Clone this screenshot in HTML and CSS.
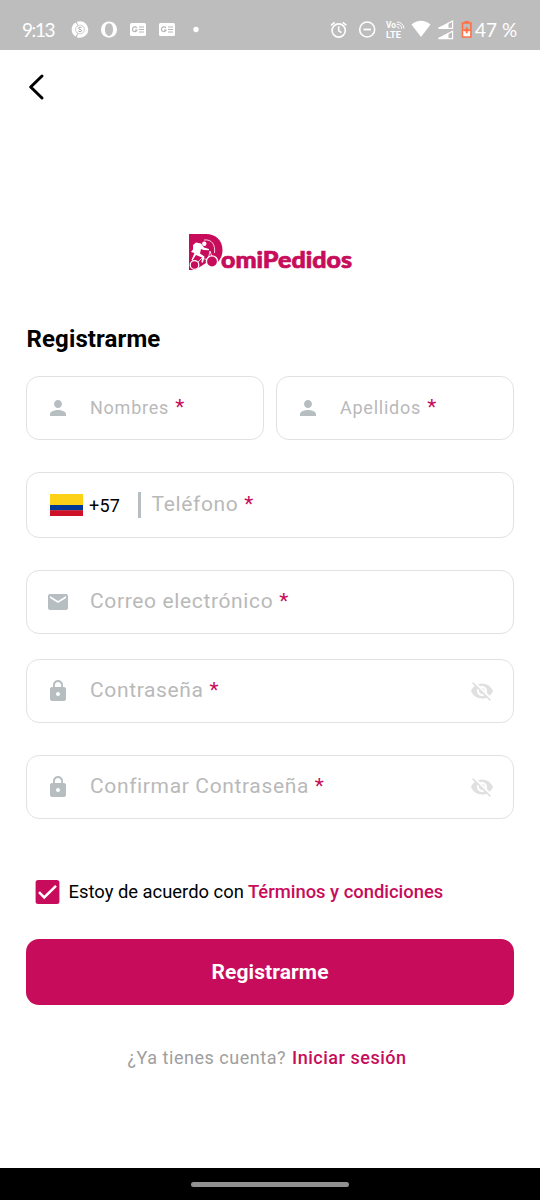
FILE: index.html
```html
<!DOCTYPE html>
<html lang="es">
<head>
<meta charset="utf-8">
<title>DomiPedidos</title>
<link rel="stylesheet" href="styles.css">
</head>
<body>
<svg class="defs" aria-hidden="true">
  <symbol id="person" viewBox="0 0 24 24"><path d="M12 12c2.21 0 4-1.79 4-4s-1.79-4-4-4-4 1.79-4 4 1.79 4 4 4zm0 2c-2.67 0-8 1.34-8 4v2h16v-2c0-2.66-5.33-4-8-4z"/></symbol>
  <symbol id="mail" viewBox="0 0 24 24"><path d="M20 4H4c-1.1 0-2 .9-2 2v12c0 1.1.9 2 2 2h16c1.1 0 2-.9 2-2V6c0-1.1-.9-2-2-2zm0 4l-8 5-8-5V6l8 5 8-5v2z"/></symbol>
  <symbol id="lock" viewBox="0 0 24 24"><path d="M18 8h-1V6c0-2.76-2.24-5-5-5S7 3.24 7 6v2H6c-1.1 0-2 .9-2 2v10c0 1.1.9 2 2 2h12c1.1 0 2-.9 2-2V10c0-1.1-.9-2-2-2zm-6 9c-1.1 0-2-.9-2-2s.9-2 2-2 2 .9 2 2-.9 2-2 2zm3.1-9H8.900V6c0-1.710 1.390-3.100 3.100-3.100s3.100 1.390 3.100 3.100v2z"/></symbol>
  <symbol id="eye-off" viewBox="0 0 24 24"><path d="M12 7c2.760 0 5 2.240 5 5 0 .650-.130 1.260-.360 1.830l2.920 2.920c1.510-1.260 2.700-2.890 3.430-4.750-1.730-4.390-6-7.500-11-7.500-1.400 0-2.740.250-3.980.700l2.160 2.160C10.740 7.130 11.350 7 12 7zM2 4.270l2.280 2.280.460.460C3.080 8.300 1.780 10.020 1 12c1.730 4.390 6 7.500 11 7.500 1.550 0 3.030-.300 4.380-.840l.420.420L19.730 22 21 20.730 3.270 3 2 4.270zM7.530 9.800l1.550 1.550c-.050.210-.080.430-.080.650 0 1.660 1.340 3 3 3 .220 0 .440-.030.650-.080l1.550 1.550c-.670.330-1.410.530-2.200.530-2.760 0-5-2.240-5-5 0-.790.200-1.530.530-2.200zm4.310-.780l3.150 3.150.020-.160c0-1.660-1.340-3-3-3l-.170.010z"/></symbol>
</svg>

<header class="status">
  <span class="clock">9:13</span>
  <svg class="notices" width="132" height="20" viewBox="0 0 132 20">
    <circle cx="9" cy="9.500" r="6.500" class="line" stroke-width="3.600" stroke-dasharray="12.600 1.013"/>
    <circle cx="9" cy="9.500" r="4.400" fill="#fff"/>
    <path d="M10.500 7.800c-.400-.800-3-.900-3 .500 0 1.300 3.100.900 3.100 2.300 0 1.500-2.800 1.300-3.300.300" fill="none" stroke="#a5a5a5" stroke-width="1"/>
    <circle cx="9" cy="9.500" r="4.300" fill="none" stroke="#c4c4c4" stroke-width=".6"/>
    <path fill="#fff" fill-rule="evenodd" d="M38 1.500a8 8.100 0 1 0 .01 0zM38 3.300c2.500 0 4 2.800 4 6.300s-1.500 6.300-4 6.300-4-2.800-4-6.300 1.500-6.300 4-6.300z"/>
    <g id="news"><rect x="59" y="3" width="16" height="13" rx="1.500" fill="#fff"/><path d="M65.800 7.900a2.400 2.400 0 1 0 .3 2.200h-2.100M68 7h5M68 9.500h5M68 12h5" fill="none" stroke="#b5b5b5" stroke-width="1.200"/></g>
    <use href="#news" x="29"/>
    <circle cx="125" cy="9.500" r="2.700" fill="#fff"/>
  </svg>
  <svg class="signals" width="142" height="22" viewBox="0 0 142 22">
    <g class="line" stroke-width="1.600">
      <circle cx="8.700" cy="11.500" r="6.600"/><path d="M8.700 7.300V11.800l2.800 1.900M1 6.300l3.600-3M16.400 6.300l-3.600-3"/>
      <circle cx="37.200" cy="10.500" r="7.500"/><path d="M33.500 10.500h7.400" stroke-width="1.800"/>
      <path d="M66.600 7.500a3 3 0 0 1 2.500 2.300M66.800 5.300a5 5 0 0 1 5 4.500M67 3a7 7 0 0 1 7 6.500" stroke-width="1"/>
      <path d="M122.600 2v7.300h-14zM122.600 12.300v7.300h-14z" stroke-width="1.200"/>
    </g>
    <text x="56" y="8.600" class="volte" textLength="10" lengthAdjust="spacingAndGlyphs">Vo</text>
    <text x="56" y="18.800" class="volte" textLength="15" lengthAdjust="spacingAndGlyphs">LTE</text>
    <path d="M81.500 5.500Q91-2 100.500 5.500L91 18z" fill="#fff"/>
    <path d="M118.500 4v5.300h-11zM118.500 14.300v5.300h-11z" fill="#fff"/>
    <path d="M132.500 4h8.400v14h-8.400z" fill="#bdbdbd" stroke="#ff7043" stroke-width="1.600"/>
    <path d="M133.300 12h6.800v5.200h-6.800z" fill="#fff"/>
    <path d="M134.500 2h4.400v2h-4.400z" fill="#ff7043"/>
    <path d="M136.700 8.200v6M133.700 11.200h6" stroke="#ff7043" stroke-width="1.900"/>
  </svg>
  <span class="battery">47 %</span>
</header>

<main class="page">
  <svg class="back" width="20" height="28" viewBox="0 0 20 28"><path d="M16 3L4.700 14l11.300 11" fill="none" stroke="#000" stroke-width="3" stroke-linecap="round" stroke-linejoin="round"/></svg>

  <svg class="logo" width="166" height="40" viewBox="0 0 166 40">
    <path d="M2 2h17c10 0 16.500 6.500 16.500 16 0 6-2.500 10-5.500 13H19L8 38H2z" fill="#c70c5b"/>
    <path d="M17 8c8-1 11.500 5 10.500 13" fill="none" stroke="#fff" stroke-width=".8"/>
    <circle cx="17.300" cy="11.800" r="2.200" fill="#fff"/>
    <path d="M6 13l3-2.500 5 1 3 4 5 1.500v1.200l-5.500-.200-2.500-1-1 4.500 4.500 3-1.500 6h-1.500l.5-5-6-2.500-3.500 5.500-1-.500 3-7-3.500-1 2-2.500z" fill="#fff"/>
    <path d="M9 32l6-6 6 2 2-9 3 9" fill="none" stroke="#fff" stroke-width=".8"/>
    <g stroke="#fff" fill="#c70c5b"><circle cx="7.500" cy="33" r="4.300" stroke-width="1.200"/><circle cx="25" cy="29.500" r="5.600" stroke-width="1.400"/></g>
    <text x="34" y="36" class="wordmark" textLength="131" lengthAdjust="spacingAndGlyphs">omiPedidos</text>
  </svg>

  <h1 class="title">Registrarme</h1>

  <form class="form">
    <div class="pair">
      <label class="field small"><svg class="icon"><use href="#person"/></svg><span class="hint">Nombres <b>*</b></span></label>
      <label class="field small"><svg class="icon"><use href="#person"/></svg><span class="hint">Apellidos <b>*</b></span></label>
    </div>
    <label class="field phone">
      <svg class="flag" width="33" height="22" viewBox="0 0 33 22"><path fill="#fdd116" d="M0 0h33v11H0z"/><path fill="#003893" d="M0 11h33v5.500H0z"/><path fill="#ce1126" d="M0 16.300h33V22H0z"/></svg>
      <span class="code">+57</span><span class="bar"></span><span class="hint">Teléfono <b>*</b></span>
    </label>
    <label class="field email"><svg class="icon"><use href="#mail"/></svg><span class="hint">Correo electrónico <b>*</b></span></label>
    <label class="field password"><svg class="icon"><use href="#lock"/></svg><span class="hint">Contraseña <b>*</b></span><svg class="eye"><use href="#eye-off"/></svg></label>
    <label class="field confirm"><svg class="icon"><use href="#lock"/></svg><span class="hint">Confirmar Contraseña <b>*</b></span><svg class="eye"><use href="#eye-off"/></svg></label>

    <div class="terms">
      <svg width="25" height="24" viewBox="0 0 25 24"><rect x=".6" width="23.800" height="24" rx="2.500" fill="#c70c5b"/><path d="M4 12.200l5.200 5.200L21 5.800" fill="none" stroke="#fff" stroke-width="2.500"/></svg>
      <span class="agree">Estoy de acuerdo con</span><a class="terms-link">Términos y condiciones</a>
    </div>
    <button type="button" class="submit">Registrarme</button>
  </form>

  <p class="login"><span>¿Ya tienes cuenta?</span><a>Iniciar sesión</a></p>
</main>
<footer class="nav"><span class="handle"></span></footer>
</body>
</html>
```
FILE: styles.css
```css
* { box-sizing: border-box; }
body {
  margin: 0;
  width: 540px;
  height: 1200px;
  display: flex;
  flex-direction: column;
  overflow: hidden;
  background: #fff;
  font-family: Roboto, sans-serif;
}
.defs { position: absolute; width: 0; height: 0; }

.status {
  height: 50px;
  flex: none;
  display: flex;
  align-items: center;
  padding: 9px 22px 0;
  background: #bdbdbd;
  color: #fff;
}
.clock, .battery { font: 19px/24px Lato, sans-serif; white-space: nowrap; }
.clock { width: 49px; letter-spacing: -1.4px; }
.signals { margin-left: auto; }
.battery { width: 43px; margin-left: 3px; }
.line { fill: none; stroke: #fff; }
.volte { font: 700 8.500px Roboto, sans-serif; fill: #fff; }

.page { flex: 1; display: flex; flex-direction: column; padding: 0 26px; }
.back { margin: 23px 0 0; flex: none; }
.logo { margin: 131px 0 0 161px; flex: none; }
.wordmark { font: 900 23.500px Lato, sans-serif; fill: #c70c5b; stroke: #c70c5b; stroke-width: 0.7px; }
.title { margin: 53px 0 0 0.5px; font-size: 24px; line-height: 29px; font-weight: 700; letter-spacing: 0.12px; }

.form { display: flex; flex-direction: column; margin-top: 22px; }
.pair { display: grid; grid-template-columns: 1fr 1fr; gap: 12px; }
.field {
  height: 64px;
  display: flex;
  align-items: center;
  border: 1px solid #e2e2e2;
  border-radius: 13px;
  padding: 0 19px;
  color: #b9b9b9;
}
.icon { width: 24px; height: 24px; fill: #b7bec2; flex: none; }
.hint { margin-left: 20px; font-size: 21px; line-height: 26px; letter-spacing: 0.64px; white-space: nowrap; padding-bottom: 2px; }
.hint b { font-weight: 400; color: #c70c5b; }
.small .hint { font-size: 18px; letter-spacing: 0.75px; padding-bottom: 0; }
.small b { font-size: 21px; line-height: 20px; margin-left: 1px; }
.phone { height: 66px; margin-top: 32px; padding-left: 23px; }
.code { margin-left: 6px; width: 32px; font-size: 18px; letter-spacing: 0.2px; color: #000; }
.bar { width: 3px; height: 26px; margin-left: 17px; background: #b7bec2; }
.phone .hint { margin-left: 10.5px; }
.email { margin-top: 32px; }
.password { margin-top: 25px; }
.confirm { margin-top: 32px; }
.eye { width: 24px; height: 24px; margin-left: auto; fill: #e0e0e0; }

.terms { display: flex; align-items: center; height: 24px; margin: 61px 0 0 9px; font-size: 18.4px; line-height: 22px; white-space: nowrap; }
.terms span, .terms a { padding-bottom: 1px; }
.agree { margin-left: 8.5px; width: 179.5px; color: #000; }
.terms-link { font-weight: 500; color: #c70c5b; }
.submit {
  height: 66px;
  margin-top: 35px;
  border: 0;
  border-radius: 13px;
  background: #c70c5b;
  color: #fff;
  font: 700 21px Roboto, sans-serif;
  letter-spacing: 0.1px;
}
.login { display: flex; margin: 41px 0 0 101.5px; font-size: 18px; line-height: 24px; color: #9e9e9e; white-space: nowrap; }
.login span { width: 164.5px; letter-spacing: 0.53px; }
.login a { font-weight: 500; color: #c70c5b; letter-spacing: 0.53px; }

.nav { height: 32px; flex: none; background: #000; display: flex; justify-content: center; align-items: center; }
.handle { width: 158px; height: 5px; border-radius: 3px; background: #919191; }
```
